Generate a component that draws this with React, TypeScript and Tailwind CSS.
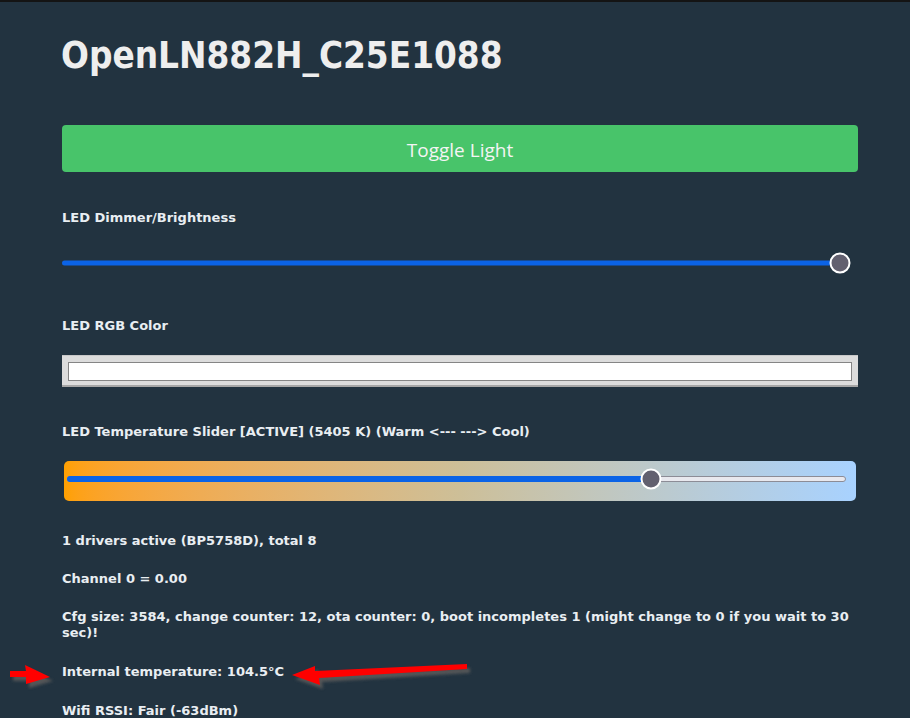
import React from "react";

function Thumb({ left }: { left: string }) {
  return (
    <div
      className="absolute top-1/2 w-[21px] h-[21px] -translate-x-1/2 -translate-y-1/2 rounded-full bg-[#62606f] border-2 border-white"
      style={{ left }}
    />
  );
}

export default function App() {
  const label = "text-[13px] leading-[16px] font-bold text-[#e9eef2]";
  return (
    <div
      className="relative min-h-[718px] w-[910px] overflow-hidden bg-[#223340] border-t-2 border-[#141414]"
      style={{ fontFamily: '"DejaVu Sans", Verdana, sans-serif' }}
    >
      <div className="flex flex-col pl-[62px] pr-[52px]">
        <h1
          className="mt-[32px] text-[36.5px] leading-[44px] font-bold text-[#eeeeee] -ml-[1px]"
          style={{ fontFamily: '"DejaVu Sans Condensed", "DejaVu Sans", sans-serif' }}
        >
          OpenLN882H_C25E1088
        </h1>

        <button
          className="mt-[47px] h-[47px] w-full rounded-[4px] bg-[#48c46a] pt-[3px] text-[19px] text-[#f4f4f4]"
          style={{ fontFamily: '"Open Sans", "Noto Sans", sans-serif' }}
        >
          Toggle Light
        </button>

        <div className={`mt-[38px] ${label}`}>LED Dimmer/Brightness</div>

        <div className="relative mt-[27px] h-[20px] w-[778px]">
          <div className="absolute left-0 right-0 top-1/2 -translate-y-1/2 h-[5px] rounded-full bg-[#0b63e6]" />
          <Thumb left="100%" />
        </div>

        <div className={`mt-[45px] ${label}`}>LED RGB Color</div>

        <div className="mt-[21px] h-[32px] w-full bg-[#dcdcdc] border-t border-[#c8c8c8] border-b-[2px] border-b-[#a6a6a6] px-[6px] pt-[6px]">
          <div className="h-[19px] w-full bg-white border border-[#858585]" />
        </div>

        <div className={`mt-[37px] ${label}`}>
          LED Temperature Slider [ACTIVE] (5405 K) (Warm &lt;--- ---&gt; Cool)
        </div>

        <div className="mt-[21px] ml-[2px] h-[40px] w-[792px] rounded-[5px] bg-gradient-to-r from-[#ffa000] via-[#cdbf98] to-[#a8d2ff] px-[3px] pt-[8px]">
          <div className="relative h-[20px] w-[779px]">
            <div className="absolute left-0 right-0 top-1/2 -translate-y-1/2 h-[6px] rounded-full bg-[#e8e8ee] border border-[#8c8c96]" />
            <div className="absolute left-0 top-1/2 -translate-y-1/2 h-[6px] rounded-full bg-[#0b63e6]" style={{ width: "75%" }} />
            <Thumb left="75%" />
          </div>
        </div>

        <p className={`mt-[32px] ${label}`}>1 drivers active (BP5758D), total 8</p>
        <p className={`mt-[22px] ${label}`}>Channel 0 = 0.00</p>
        <p className={`mt-[22px] ${label} pr-[4px]`}>
          Cfg size: 3584, change counter: 12, ota counter: 0, boot incompletes 1 (might change to 0 if you wait to 30 sec)!
        </p>
        <p className={`mt-[23px] ${label}`}>Internal temperature: 104.5°C</p>
        <p className={`mt-[23px] ${label}`}>Wifi RSSI: Fair (-63dBm)</p>
      </div>

      <svg className="absolute left-0 top-0 pointer-events-none" width="910" height="718" viewBox="0 -2 910 718">
        <defs>
          <filter id="sh" x="-20%" y="-50%" width="140%" height="200%">
            <feGaussianBlur stdDeviation="1.6" />
          </filter>
        </defs>
        <g transform="translate(3,4)" fill="#5a5a5a" filter="url(#sh)" opacity="0.9">
          <polygon points="10,667 26,667 25,661 50,673 26,680 26,673 10,673" />
          <polygon points="292,671 315,662 315,667 467,660 467,665 319,674 320,681" />
        </g>
        <g fill="#ff0000">
          <polygon points="10,667 26,667 25,661 50,673 26,680 26,673 10,673" />
          <polygon points="292,671 315,662 315,667 467,660 467,665 319,674 320,681" />
        </g>
      </svg>
    </div>
  );
}
